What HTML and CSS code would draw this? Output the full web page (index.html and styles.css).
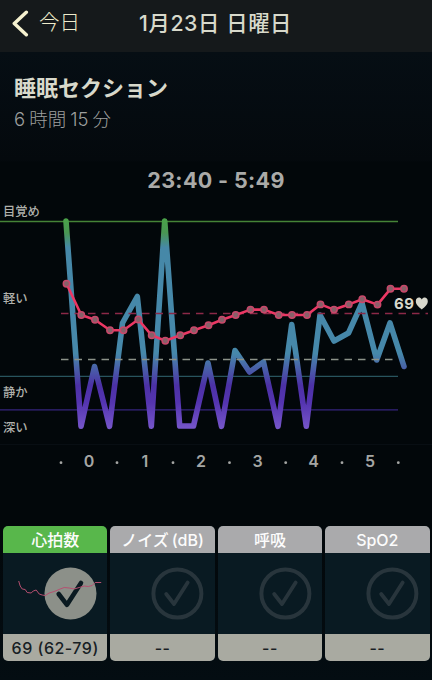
FILE: index.html
```html
<!DOCTYPE html>
<html lang="ja">
<head>
    <meta charset="UTF-8">
    <title>睡眠セクション</title>
    <link rel="stylesheet" href="styles.css">
</head>
<body>
    <header class="navbar">
        <a class="back" href="#">
            <svg width="20" height="28" viewBox="0 0 20 28"><path d="M15.3 3.3 L3.3 14.5 L15.3 25.7"/></svg>
            <span>今日</span>
        </a>
        <h1>1月23日 日曜日</h1>
    </header>
    <section class="summary">
        <h2>睡眠セクション</h2>
        <p><span>6</span><span>時間</span><span>15</span><span>分</span></p>
    </section>
    <main class="sleep">
        <h3>23:40 - 5:49</h3>
        <svg class="chart" width="432" height="290" viewBox="0 200 432 290">
            <defs>
                <linearGradient id="stages" gradientUnits="userSpaceOnUse" x1="0" y1="218" x2="0" y2="430">
                    <stop offset="0" stop-color="#4aa348"/>
                    <stop offset="0.07" stop-color="#499653"/>
                    <stop offset="0.14" stop-color="#4688a8"/>
                    <stop offset="0.64" stop-color="#4688aa"/>
                    <stop offset="0.79" stop-color="#4c31a6"/>
                    <stop offset="0.87" stop-color="#5434b0"/>
                    <stop offset="1" stop-color="#7858cb"/>
                </linearGradient>
            </defs>
            <path class="line awake" d="M0 221.5H398"/>
            <path class="line light" d="M0 376.3H398"/>
            <path class="line deep" d="M0 409.8H398"/>
            <path class="line base" d="M0 444.5H432"/>
            <polyline class="stage" points="66,221 81,426.3 94.5,366.5 109.5,426.3 122.5,323 137.3,296.5 151.3,426.3 164.7,221 179.7,426 193.5,426 208,363 221.5,426.3 235,350.5 249.5,372 263.5,362 278,426.3 291.7,324.5 306.3,426.3 320,315 334,341 348.5,333 362,303 376.7,360 390,323 404,366.5"/>
            <path class="line average" d="M61 313.5H428"/>
            <path class="line limit" d="M61 359.5H393"/>
            <polyline class="pulse" points="66.5,283.7 81.3,315 95,319.8 110,330.2 123.5,330.2 138.3,319.5 151.7,335.3 165.3,340.7 180.3,335.3 194,330.2 208.5,325.2 222,319.8 235.7,315 250.5,309.6 264,309.6 278.7,315 292,315 307,315 320.5,304.4 334,309.6 348.8,304.4 362.3,299.2 377.5,304.6 390.5,288.8 404,288.8"/>
            <g class="names">
                <text x="3" y="216">目覚め</text>
                <text x="3" y="303">軽い</text>
                <text x="3" y="397">静か</text>
                <text x="3" y="431.5">深い</text>
            </g>
            <text class="last" x="394" y="308.5" textLength="20">69</text>
            <path class="heart" d="M421.8 309.5C419 307 415.8 304.7 415.8 301.2C415.8 297 420.2 296.4 421.8 299.4C423.4 296.4 427.8 297 427.8 301.2C427.8 304.7 424.6 307 421.8 309.5Z"/>
            <g class="hours">
                <text x="89" y="467.3">0</text>
                <text x="145" y="467.3">1</text>
                <text x="201" y="467.3">2</text>
                <text x="257.5" y="467.3">3</text>
                <text x="313.5" y="467.3">4</text>
                <text x="370" y="467.3">5</text>
            </g>
            <g class="halves">
                <circle cx="61" cy="462.7" r="1.4"/>
                <circle cx="117" cy="462.7" r="1.4"/>
                <circle cx="173" cy="462.7" r="1.4"/>
                <circle cx="229.5" cy="462.7" r="1.4"/>
                <circle cx="285.7" cy="462.7" r="1.4"/>
                <circle cx="342" cy="462.7" r="1.4"/>
                <circle cx="398.3" cy="462.7" r="1.4"/>
            </g>
        </svg>
    </main>
    <div class="tiles">
        <div class="tile active">
            <div class="tile-head">心拍数</div>
            <svg class="tile-body" viewBox="0 0 104 81">
                <circle class="ring" cx="67.3" cy="40.5" r="26"/>
                <path class="tick" d="M55.5 41L63.8 51.8L77.8 30"/>
                <polyline class="mini" points="15.5,28 17,33 19,36 22,36.5 24,39.5 28,40 30,38 33,37 36,41 39,42 42,42.5 46,40 51,38.5 57,36 61,34.5 66,35 71,36 76,34.5 81,33 85,33.5 89,32.5 92,29.5 98,29.5"/>
            </svg>
            <div class="tile-foot">69 (62-79)</div>
        </div>
        <div class="tile">
            <div class="tile-head">ノイズ<span class="unit">(dB)</span></div>
            <svg class="tile-body" viewBox="0 0 104 81">
                <circle class="ring" cx="67.2" cy="40.5" r="24"/>
                <path class="tick" d="M56 41L63.8 51L77.5 29.5"/>
            </svg>
            <div class="tile-foot">--</div>
        </div>
        <div class="tile">
            <div class="tile-head">呼吸</div>
            <svg class="tile-body" viewBox="0 0 104 81">
                <circle class="ring" cx="67.2" cy="40.5" r="24"/>
                <path class="tick" d="M56 41L63.8 51L77.5 29.5"/>
            </svg>
            <div class="tile-foot">--</div>
        </div>
        <div class="tile">
            <div class="tile-head">SpO2</div>
            <svg class="tile-body" viewBox="0 0 104 81">
                <circle class="ring" cx="67.2" cy="40.5" r="24"/>
                <path class="tick" d="M56 41L63.8 51L77.5 29.5"/>
            </svg>
            <div class="tile-foot">--</div>
        </div>
    </div>
    <script>
        //Puntos del pulso
        const pulse = document.querySelector('.pulse');
        const dots = document.createElementNS('http://www.w3.org/2000/svg', 'g');
        dots.setAttribute('class', 'dots');
        for (const p of pulse.points) {
            const dot = document.createElementNS('http://www.w3.org/2000/svg', 'circle');
            dot.setAttribute('cx', p.x);
            dot.setAttribute('cy', p.y);
            dot.setAttribute('r', 3.2);
            dots.appendChild(dot);
        }
        pulse.after(dots);
    </script>
</body>
</html>
```
FILE: styles.css
```css
*{
    box-sizing: border-box;
}
body{
    margin: 0;
    width: 432px; height: 680px;
    overflow: hidden;
    background: linear-gradient(#060e14 52px, #04090d 160px, #02070a 162px, #02070a 520px, #040d12 680px);
    font-family: Inter, "Noto Sans CJK JP", sans-serif;
    color: #aaaaa8;
}
h1, h2, h3, p{
    margin: 0;
}
.navbar{
    display: grid;
    grid-template-columns: 1fr auto 1fr;
    align-items: center;
    height: 52px;
    padding: 0 12px 7px 11px;
    background: #15191b;
}
.navbar h1{
    font-size: 21.3px; font-weight: 500;
    line-height: 28px;
    letter-spacing: 0.6px;
    color: #d8d9cb;
}
.back{
    display: flex;
    align-items: center;
    gap: 8px;
    font-size: 20.5px;
    line-height: 28px;
    color: #eeeccb;
    text-decoration: none;
}
.back span{
    font-weight: 300;
}
.back path{
    fill: none;
    stroke: #f5f1cf;
    stroke-width: 3.5;
    stroke-linecap: round;
    stroke-linejoin: round;
}
.summary{
    height: 110px;
    padding: 20px 14px 0;
}
.summary h2{
    font-size: 22px;
    line-height: 32px;
    color: #d8d9cb;
}
.summary p{
    display: flex;
    gap: 4px;
    font-size: 18.5px; font-weight: 300;
    line-height: 31px;
    color: #9d9f9e;
}
.sleep h3{
    height: 38px;
    padding-top: 3px;
    font-size: 21.5px; font-weight: 700;
    line-height: 30px;
    letter-spacing: 0.35px;
    text-align: center;
}
.chart{
    display: block;
}
.line{
    fill: none;
    stroke-width: 1;
}
.awake{
    stroke: #458337;
    stroke-width: 1.3;
}
.light{
    stroke: #28545e;
    stroke-width: 1.3;
}
.deep{
    stroke: #35247c;
    stroke-width: 1.3;
}
.base{
    stroke: #080e13;
}
.average{
    stroke: #8c2948;
    stroke-width: 1.3;
    stroke-dasharray: 7.5 6;
}
.limit{
    stroke: #8c9289;
    stroke-width: 1.3;
    stroke-dasharray: 7.5 6;
}
.stage{
    fill: none;
    stroke: url(#stages);
    stroke-width: 5.6;
    stroke-linecap: round;
    stroke-linejoin: round;
}
.pulse{
    fill: none;
    stroke: #ec3764;
    stroke-width: 2.6;
    stroke-linejoin: round;
}
.dots circle{
    fill: #886069;
    stroke: #c8486a;
    stroke-width: 1.5;
}
.names text{
    font-size: 12.3px; font-weight: 500;
    fill: #b0b1ac;
}
.last{
    font-size: 15px; font-weight: 700;
    fill: #d8d8cd;
}
.heart{
    fill: #d8d8cd;
}
.hours text{
    font-size: 16px; font-weight: 600;
    text-anchor: middle;
    fill: #a5a6a4;
}
.halves circle{
    fill: #a5a6a4;
}
.tiles{
    display: grid;
    grid-template-columns: repeat(4, 1fr);
    gap: 3px;
    margin-top: 36px;
    padding: 0 2.5px 0 3px;
}
.tile{
    overflow: hidden;
    border-radius: 5px;
    background: #091a22;
}
.tile-head, .tile-foot{
    height: 27px;
    font-size: 16px; font-weight: 500;
    line-height: 28px;
    text-align: center;
    white-space: nowrap;
}
.tile-head{
    background: #aaaaac;
    color: #fcfcfc;
}
.active .tile-head{
    background: #58b74b;
}
.unit{
    margin-left: 3px;
}
.tile-foot{
    background: #a9aaa1;
    color: #172024;
    letter-spacing: 0.5px;
}
.tile-body{
    display: block;
    width: 100%; height: 81px;
}
.ring{
    fill: none;
    stroke: #28353c;
    stroke-width: 4;
}
.tick{
    fill: none;
    stroke: #28353c;
    stroke-width: 3.8;
    stroke-linecap: round;
    stroke-linejoin: round;
}
.active .ring{
    fill: #8c9089;
    stroke: none;
}
.active .tick{
    stroke: #0a1a21;
    stroke-width: 4.6;
}
.mini{
    fill: none;
    stroke: #b64f70;
    stroke-width: 1;
}
```
